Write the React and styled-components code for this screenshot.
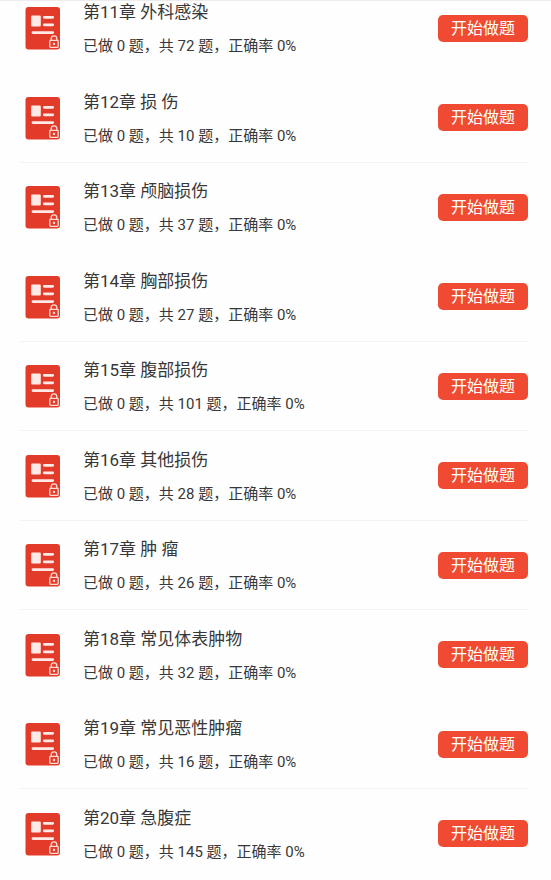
import React from 'react';
import styled, { createGlobalStyle } from 'styled-components';

const GlobalStyle = createGlobalStyle`
  *, *::before, *::after { box-sizing: border-box; }
  body {
    margin: 0;
    background: #fefefe;
    color: #383838;
    font-family: Roboto, "Noto Sans CJK SC", sans-serif;
  }
`;

const Page = styled.main`
  border-top: 1px solid #ececec;
  overflow: hidden;
`;

const ChapterList = styled.ul`
  list-style: none;
  margin: -17px 23px 0 20px;
  padding: 0;
`;

const Chapter = styled.li`
  display: flex;
  align-items: center;
  height: 89px;
  border-bottom: 1px solid ${(p) => (p.$divided ? '#f3f3f3' : 'transparent')};
  padding-left: 5px;

  &:nth-child(even) {
    height: 90px;
  }
`;

const Icon = styled.svg`
  flex: none;
  width: 36px;
  height: 44px;
`;

const Info = styled.div`
  flex: 1;
  min-width: 0;
  margin-left: 22px;
`;

const Title = styled.h2`
  margin: 0 0 10px;
  font-size: 17px;
  font-weight: 400;
  line-height: 26px;
`;

const Progress = styled.p`
  margin: 0;
  font-size: 15px;
  line-height: 22px;
`;

const StartButton = styled.button`
  flex: none;
  width: 90px;
  height: 27px;
  padding: 0;
  border: 0;
  border-radius: 5px;
  background: #f04a32;
  color: #fff;
  font: inherit;
  font-size: 16px;
  line-height: 27px;
  cursor: pointer;
`;

function LockedPaper() {
  return (
    <Icon viewBox="0 0 36 44" aria-hidden="true">
      <rect x="0.5" y="1" width="34.5" height="42.5" rx="3" fill="#e23b29" />
      <rect x="6.2" y="9.6" width="9.6" height="11" rx="1" fill="#ffe9e6" />
      <path
        d="M19.3 11.3h8.4M19.3 18.8h8.4M8 26.6h19.7"
        fill="none"
        stroke="#ffe9e6"
        strokeWidth="2.8"
        strokeLinecap="round"
      />
      <g fill="none" stroke="#ffdcd6" strokeWidth="1.3">
        <path d="M26.2 34.4v-1.8a2.8 2.8 0 0 1 5.6 0v1.8" />
        <rect x="24.8" y="34.4" width="8.4" height="7" rx="0.8" />
      </g>
      <rect x="27.9" y="36.8" width="2.2" height="2.2" rx="0.6" fill="#ffdcd6" />
    </Icon>
  );
}

const chapters = [
  { title: '第11章 外科感染', total: 72 },
  { title: '第12章 损 伤', total: 10, divided: true },
  { title: '第13章 颅脑损伤', total: 37 },
  { title: '第14章 胸部损伤', total: 27, divided: true },
  { title: '第15章 腹部损伤', total: 101, divided: true },
  { title: '第16章 其他损伤', total: 28, divided: true },
  { title: '第17章 肿 瘤', total: 26, divided: true },
  { title: '第18章 常见体表肿物', total: 32 },
  { title: '第19章 常见恶性肿瘤', total: 16, divided: true },
  { title: '第20章 急腹症', total: 145 },
];

export default function App() {
  return (
    <Page>
      <GlobalStyle />
      <ChapterList>
        {chapters.map((c) => (
          <Chapter key={c.title} $divided={c.divided}>
            <LockedPaper />
            <Info>
              <Title>{c.title}</Title>
              <Progress>已做 0 题，共 {c.total} 题，正确率 0%</Progress>
            </Info>
            <StartButton type="button">开始做题</StartButton>
          </Chapter>
        ))}
      </ChapterList>
    </Page>
  );
}
